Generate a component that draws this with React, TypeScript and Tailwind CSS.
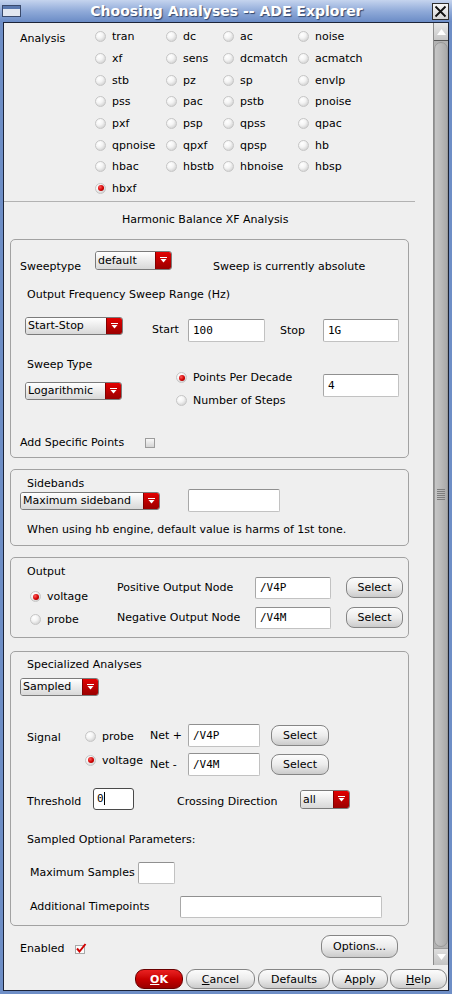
import React from "react";

const Radio = ({ on = false }: { on?: boolean }) => (
  <span className="w-[11px] h-[11px] shrink-0 rounded-full border border-[#c6c6c6] bg-[radial-gradient(circle_at_35%_30%,#ffffff_0%,#f4f4f4_40%,#c4c4c4_100%)] flex items-center justify-center">
    {on && (
      <span className="w-[6px] h-[6px] rounded-full bg-[radial-gradient(circle_at_35%_35%,#ff5a5a,#d00000_55%,#860000)]" />
    )}
  </span>
);

const Drop = ({ label, className = "" }: { label: string; className?: string }) => (
  <div className={`flex shrink-0 rounded-[3px] border border-[#7b7b7b] overflow-hidden ${className}`}>
    <div className="flex-1 flex items-center pl-[2px] bg-gradient-to-b from-white to-[#d8d8d8] whitespace-nowrap">
      {label}
    </div>
    <div className="w-[16px] flex items-center justify-center bg-gradient-to-b from-[#e30000] to-[#9a0000] border-l border-[#800000]">
      <svg width="7" height="6" viewBox="0 0 7 6">
        <path d="M0 0.5h7" stroke="#fff" strokeWidth="1" />
        <path d="M0.5 2h6L3.5 5.5z" fill="#fff" />
      </svg>
    </div>
  </div>
);

const Field = ({ value = "", className = "" }: { value?: string; className?: string }) => (
  <div
    className={`shrink-0 flex items-center pl-[4px] bg-white border border-[#c2c2c2] border-t-[#909090] border-l-[#a8a8a8] rounded-[2px] font-['DejaVu_Sans_Mono',monospace] text-[11px] ${className}`}
  >
    {value}
  </div>
);

const Btn = ({ children, className = "" }: { children: React.ReactNode; className?: string }) => (
  <div
    className={`shrink-0 flex items-center justify-center rounded-[8px] border border-[#858585] bg-gradient-to-b from-[#fcfcfc] via-[#ececec] to-[#cbcbcb] ${className}`}
  >
    {children}
  </div>
);

const Group = ({ children, className = "" }: { children: React.ReactNode; className?: string }) => (
  <div className={`ml-[6px] w-[399px] shrink-0 border border-[#a2a2a2] rounded-[5px] flex flex-col ${className}`}>
    {children}
  </div>
);

const analyses = [
  ["tran", "dc", "ac", "noise"],
  ["xf", "sens", "dcmatch", "acmatch"],
  ["stb", "pz", "sp", "envlp"],
  ["pss", "pac", "pstb", "pnoise"],
  ["pxf", "psp", "qpss", "qpac"],
  ["qpnoise", "qpxf", "qpsp", "hb"],
  ["hbac", "hbstb", "hbnoise", "hbsp"],
  ["hbxf"],
];

export default function App() {
  return (
    <div className="w-[452px] h-[994px] flex flex-col bg-[#6e8ec6] font-['DejaVu_Sans',sans-serif] text-[11px] leading-[13px] text-black overflow-hidden">
      {/* title bar */}
      <div className="h-[22px] shrink-0 flex items-center bg-gradient-to-b from-[#c5d4ee] via-[#91abd9] to-[#6b8cc6]">
        <div className="ml-[2px] w-[19px] h-[12px] border border-[#3a4a6c] bg-[#e2e7f0] flex flex-col">
          <div className="h-[3px] bg-[#5a78ae]" />
        </div>
        <div className="flex-1 text-center text-white font-bold text-[14px] leading-[16px] [text-shadow:1px_1px_1px_#33466b]">
          Choosing Analyses -- ADE Explorer
        </div>
        <div className="mr-[3px] w-[17px] h-[17px] border border-[#2e2e2e] bg-gradient-to-b from-[#f6f6f6] to-[#d6d6d6] flex items-center justify-center">
          <svg width="13" height="13" viewBox="0 0 13 13">
            <path d="M1.5 1.5l10 10M11.5 1.5l-10 10" stroke="#111" strokeWidth="1.8" />
          </svg>
        </div>
      </div>

      <div className="flex-1 mx-[3px] mb-[3px] border border-[#1c2438] bg-[#efefef] flex flex-col min-h-0">
        <div className="h-[942px] shrink-0 flex">
          {/* scrollable content */}
          <div className="flex-1 flex flex-col overflow-hidden">
            {/* analysis choice */}
            <div className="flex pt-[3px] shrink-0">
              <div className="w-[91px] pl-[16px] pt-[6px]">Analysis</div>
              <div className="grid grid-cols-[71px_57px_75px_80px] auto-rows-[21.67px]">
                {analyses.flat().map((a) => (
                  <div key={a} className="flex items-center">
                    <Radio on={a === "hbxf"} />
                    <span className="ml-[6px]">{a}</span>
                  </div>
                ))}
              </div>
            </div>
            <div className="mt-[2px] h-[1px] w-[411px] shrink-0 bg-[#b2b2b2]" />
            <div className="mt-[11px] h-[13px] pl-[118px] shrink-0">Harmonic Balance XF Analysis</div>

            {/* sweep */}
            <Group className="mt-[12.5px] h-[219px]">
              <div className="mt-[11px] h-[22px] flex items-end">
                <span className="ml-[9px] w-[75px]">Sweeptype</span>
                <Drop label="default" className="self-start w-[77px] h-[19px]" />
                <span className="ml-[41px]">Sweep is currently absolute</span>
              </div>
              <div className="mt-[15.5px] h-[13px] pl-[16px]">Output Frequency Sweep Range (Hz)</div>
              <div className="mt-[15.5px] h-[25px] flex items-start">
                <Drop label="Start-Stop" className="ml-[14px] w-[98px] h-[18px]" />
                <span className="ml-[29px] w-[36px] mt-[6.5px]">Start</span>
                <Field value="100" className="w-[77px] h-[23px] mt-[2px]" />
                <span className="ml-[15px] w-[43px] mt-[7.5px]">Stop</span>
                <Field value="1G" className="w-[76px] h-[23px] mt-[2px]" />
              </div>
              <div className="mt-[16.5px] h-[13px] pl-[16px]">Sweep Type</div>
              <div className="h-[36px] flex items-start">
                <Drop label="Logarithmic" className="ml-[14px] mt-[10.5px] w-[97px] h-[18px]" />
                <div className="ml-[54px] w-[147px] flex flex-col gap-[10px]">
                  <div className="h-[13px] flex items-center">
                    <Radio on />
                    <span className="ml-[6px]">Points Per Decade</span>
                  </div>
                  <div className="h-[13px] flex items-center">
                    <Radio />
                    <span className="ml-[6px]">Number of Steps</span>
                  </div>
                </div>
                <Field value="4" className="w-[76px] h-[23px] mt-[2.5px]" />
              </div>
              <div className="mt-[29px] h-[13px] flex items-center">
                <span className="ml-[9px] w-[125px]">Add Specific Points</span>
                <span className="w-[10px] h-[10px] border border-[#9c9c9c] bg-gradient-to-b from-[#f8f8f8] to-[#d4d4d4]" />
              </div>
            </Group>

            {/* sidebands */}
            <Group className="mt-[11px] h-[77px]">
              <div className="flex items-start">
                <div className="ml-[9px] w-[140px] flex flex-col">
                  <span className="pl-[7px] mt-[7.5px] h-[13px]">Sidebands</span>
                  <Drop label="Maximum sideband" className="mt-[1.5px] w-[140px] h-[18px]" />
                </div>
                <Field className="ml-[28px] mt-[19px] w-[92px] h-[23px]" />
              </div>
              <div className="mt-[11.5px] h-[13px] pl-[16px]">
                When using hb engine, default value is harms of 1st tone.
              </div>
            </Group>

            {/* output */}
            <Group className="mt-[11px] h-[81px]">
              <div className="flex items-start">
                <div className="ml-[16px] w-[90px] flex flex-col">
                  <span className="mt-[7.5px] h-[13px]">Output</span>
                  <div className="mt-[12px] ml-[3px] h-[13px] flex items-center">
                    <Radio on />
                    <span className="ml-[6px]">voltage</span>
                  </div>
                  <div className="mt-[10px] ml-[3px] h-[13px] flex items-center">
                    <Radio />
                    <span className="ml-[6px]">probe</span>
                  </div>
                </div>
                <div className="mt-[19px] flex flex-col gap-[8px]">
                  <div className="h-[22px] flex items-center">
                    <span className="w-[138px]">Positive Output Node</span>
                    <Field value="/V4P" className="w-[76px] h-[22px]" />
                    <Btn className="ml-[15px] w-[57px] h-[21px]">Select</Btn>
                  </div>
                  <div className="h-[22px] flex items-center">
                    <span className="w-[138px]">Negative Output Node</span>
                    <Field value="/V4M" className="w-[76px] h-[22px]" />
                    <Btn className="ml-[15px] w-[57px] h-[21px]">Select</Btn>
                  </div>
                </div>
              </div>
            </Group>

            {/* specialized analyses */}
            <Group className="mt-[13px] h-[275px]">
              <span className="pl-[16px] mt-[6.5px] h-[13px]">Specialized Analyses</span>
              <Drop label="Sampled" className="ml-[9px] mt-[6.5px] w-[79px] h-[18px]" />
              <div className="mt-[28px] h-[23px] flex items-start">
                <span className="ml-[16px] w-[58px] mt-[7.5px]">Signal</span>
                <div className="mt-[6px] h-[13px] flex items-center">
                  <Radio />
                  <span className="ml-[6px] w-[48px]">probe</span>
                </div>
                <span className="w-[38px] mt-[5.5px]">Net +</span>
                <Field value="/V4P" className="w-[72px] h-[23px]" />
                <Btn className="ml-[11px] mt-[1px] w-[58px] h-[21px]">Select</Btn>
              </div>
              <div className="mt-[6px] h-[23px] flex items-start">
                <span className="ml-[16px] w-[58px]" />
                <div className="mt-[1px] h-[13px] flex items-center">
                  <Radio on />
                  <span className="ml-[6px] w-[48px]">voltage</span>
                </div>
                <span className="w-[38px] mt-[5.5px]">Net -</span>
                <Field value="/V4M" className="w-[72px] h-[23px]" />
                <Btn className="ml-[11px] mt-[1px] w-[58px] h-[21px]">Select</Btn>
              </div>
              <div className="mt-[12px] h-[22px] flex items-start">
                <span className="ml-[16px] w-[66px] mt-[7.5px]">Threshold</span>
                <div className="w-[41px] h-[22px] flex items-center pl-[3px] bg-white border border-[#4a4a4a] rounded-[3px] font-['DejaVu_Sans_Mono',monospace]">
                  0<span className="w-[1px] h-[13px] bg-black" />
                </div>
                <span className="ml-[43px] w-[123px] mt-[7.5px]">Crossing Direction</span>
                <Drop label="all" className="mt-[2px] w-[50px] h-[19px]" />
              </div>
              <span className="mt-[23.5px] h-[13px] pl-[16px]">Sampled Optional Parameters:</span>
              <div className="mt-[15.5px] h-[22px] flex items-start">
                <span className="ml-[19px] w-[108px] mt-[4.5px]">Maximum Samples</span>
                <Field className="w-[37px] h-[22px]" />
              </div>
              <div className="mt-[12px] h-[22px] flex items-start">
                <span className="ml-[19px] w-[150px] mt-[4.5px]">Additional Timepoints</span>
                <Field className="w-[202px] h-[22px]" />
              </div>
            </Group>

            <div className="mt-[9px] h-[23px] shrink-0 flex items-start">
              <span className="ml-[16px] w-[55px] mt-[7.5px]">Enabled</span>
              <svg className="mt-[8px]" width="12" height="11" viewBox="0 0 12 11">
                <rect x="0.5" y="2.5" width="9" height="8" fill="#fbfbfb" stroke="#a8a8a8" />
                <path d="M2 5.5l2.5 3L10.5 1" fill="none" stroke="#d00000" strokeWidth="2" />
              </svg>
              <Btn className="ml-[234px] w-[77px] h-[23px] rounded-[9px]">Options...</Btn>
            </div>
          </div>

          {/* scrollbar */}
          <div className="w-[15px] shrink-0 border-l border-[#8c8c8c] bg-[#b2b2b2] flex flex-col">
            <div className="h-[18px] shrink-0 bg-gradient-to-b from-[#e8e8e8] to-[#c6c6c6] border-b border-[#555] flex items-center justify-center">
              <svg width="9" height="6" viewBox="0 0 9 6">
                <path d="M0 6L4.5 0L9 6z" fill="#fff" />
              </svg>
            </div>
            <div className="flex-1 mt-[1px] rounded-[7px] border border-[#999] bg-gradient-to-r from-[#c6c6c6] via-[#bababa] to-[#a9a9a9] flex items-center justify-center">
              <svg width="8" height="11" viewBox="0 0 8 11">
                {[0, 2, 4, 6, 8, 10].map((y) => (
                  <path key={y} d={`M0 ${y + 0.5}h8`} stroke="#7d7d7d" strokeWidth="1" />
                ))}
              </svg>
            </div>
            <div className="h-[17px] shrink-0 mt-[1px] bg-gradient-to-b from-[#dedede] to-[#c4c4c4] border-t border-[#9a9a9a] flex items-center justify-center">
              <svg width="9" height="6" viewBox="0 0 9 6">
                <path d="M0 0L4.5 6L9 0z" fill="#fff" />
              </svg>
            </div>
          </div>
        </div>

        {/* dialog buttons */}
        <div className="flex-1 flex items-start pt-[4px] pl-[131px] gap-[3px]">
          <div className="w-[48px] h-[20px] flex items-center justify-center rounded-[9px] border border-[#6a0000] bg-gradient-to-b from-[#ea2020] via-[#c80000] to-[#990000] text-white font-bold">
            <span className="underline">O</span>K
          </div>
          <Btn className="w-[69px] h-[20px] rounded-[9px]">
            <span className="underline">C</span>ancel
          </Btn>
          <Btn className="w-[72px] h-[20px] rounded-[9px]">Defaults</Btn>
          <Btn className="ml-[-1px] w-[56px] h-[20px] rounded-[9px]">Apply</Btn>
          <Btn className="ml-[-1px] w-[57px] h-[20px] rounded-[9px]">
            <span className="underline">H</span>elp
          </Btn>
        </div>
      </div>
    </div>
  );
}
